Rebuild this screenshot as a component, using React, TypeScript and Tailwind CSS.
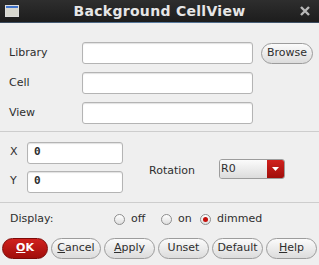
import React from "react";

const inputCls =
  "h-[22px] bg-white border border-[#b4b4b4] rounded-[3px] shadow-[inset_0_1px_1px_rgba(0,0,0,0.12)]";

function Btn({ children, w, red }: { children: React.ReactNode; w: string; red?: boolean }) {
  return (
    <div
      className={
        "h-[21px] rounded-full border flex items-center justify-center text-[11px] " +
        w +
        (red
          ? " bg-gradient-to-b from-[#d0211d] to-[#a10d0a] border-[#7d0a08] text-white font-bold"
          : " bg-gradient-to-b from-[#fbfbfb] to-[#dcdcdc] border-[#9c9c9c] text-[#2e2e2e]")
      }
    >
      {children}
    </div>
  );
}

function Radio({ checked }: { checked?: boolean }) {
  return (
    <div className="w-[11px] h-[11px] rounded-full border border-[#8e8e8e] bg-gradient-to-b from-white to-[#dedede] flex items-center justify-center">
      {checked && <div className="w-[5px] h-[5px] rounded-full bg-[#c40f0b]" />}
    </div>
  );
}

export default function App() {
  return (
    <div
      className="w-[319px] h-[265px] bg-[#efefef] text-[#2e2e2e] overflow-hidden flex flex-col"
      style={{ fontFamily: '"DejaVu Sans", sans-serif' }}
    >
      {/* title bar */}
      <div className="h-[22px] bg-gradient-to-b from-[#2e2e2e] to-[#1d1d1d] flex items-center relative">
        <div className="ml-[5px] w-[14px] h-[12px] border border-[#dcdcdc] bg-[#d8d8d0] flex flex-col">
          <div className="h-[2px] bg-[#3f72c9]" />
        </div>
        <div className="flex-1 text-center text-[14px] font-bold text-[#e6e6e6] tracking-[0.3px]">
          Background CellView
        </div>
        <svg width="10" height="10" viewBox="0 0 10 10" className="mr-[9px]">
          <path d="M1 1L9 9M9 1L1 9" stroke="#b8b8b8" strokeWidth="2.4" />
        </svg>
      </div>
      <div className="h-[1px] bg-gradient-to-r from-[#3a4a5c] via-[#5b7fa5] to-[#3a4a5c]" />

      {/* section 1 */}
      <div className="flex flex-col pt-[19px] gap-[8px] h-[108px]">
        <div className="flex items-center">
          <div className="w-[82px] pl-[9px] text-[11px]">Library</div>
          <div className={inputCls + " w-[171px] border-[#8a8a8a]"} />
          <div className="ml-[8px]">
            <Btn w="w-[52px]">Browse</Btn>
          </div>
        </div>
        <div className="flex items-center">
          <div className="w-[82px] pl-[9px] text-[11px]">Cell</div>
          <div className={inputCls + " w-[171px]"} />
        </div>
        <div className="flex items-center">
          <div className="w-[82px] pl-[9px] text-[11px]">View</div>
          <div className={inputCls + " w-[171px]"} />
        </div>
      </div>
      <div className="h-[1px] bg-[#cdcdcd]" />

      {/* section 2 */}
      <div className="flex items-center h-[70px]">
        <div className="flex flex-col gap-[7px]">
          <div className="flex items-center">
            <div className="w-[27px] pl-[10px] text-[11px]">X</div>
            <div className={inputCls + " w-[96px] flex items-center pl-[6px] text-[11px] font-bold"} style={{ fontFamily: '"DejaVu Sans Mono", monospace' }}>0</div>
          </div>
          <div className="flex items-center">
            <div className="w-[27px] pl-[10px] text-[11px]">Y</div>
            <div className={inputCls + " w-[96px] flex items-center pl-[6px] text-[11px] font-bold"} style={{ fontFamily: '"DejaVu Sans Mono", monospace' }}>0</div>
          </div>
        </div>
        <div className="ml-[26px] w-[70px] text-[11px] mt-[8px]">Rotation</div>
        <div className="h-[20px] w-[66px] rounded-[3px] border border-[#9c9c9c] flex overflow-hidden mt-[4px]">
          <div className="flex-1 bg-gradient-to-b from-[#fbfbfb] to-[#dcdcdc] text-[11px] pl-[1px] flex items-center">R0</div>
          <div className="w-[17px] bg-gradient-to-b from-[#d0211d] to-[#a10d0a] flex items-center justify-center">
            <svg width="7" height="4" viewBox="0 0 7 4"><path d="M0 0H7L3.5 4Z" fill="white" /></svg>
          </div>
        </div>
      </div>
      <div className="h-[1px] bg-[#cdcdcd]" />

      {/* display */}
      <div className="flex items-center h-[33px] text-[11px]">
        <div className="w-[114px] pl-[10px]">Display:</div>
        <Radio />
        <div className="ml-[6px] w-[30px]">off</div>
        <Radio />
        <div className="ml-[6px] w-[22px]">on</div>
        <Radio checked />
        <div className="ml-[6px]">dimmed</div>
      </div>

      {/* buttons */}
      <div className="flex items-center pl-[2px] gap-[3px] mt-[2px]">
        <Btn w="w-[46px]" red><span className="underline">O</span>K</Btn>
        <Btn w="w-[50px]"><span className="underline">C</span>ancel</Btn>
        <Btn w="w-[51px]"><span className="underline">A</span>pply</Btn>
        <Btn w="w-[51px]">Unset</Btn>
        <Btn w="w-[51px]">Default</Btn>
        <Btn w="w-[51px]"><span className="underline">H</span>elp</Btn>
      </div>
    </div>
  );
}
